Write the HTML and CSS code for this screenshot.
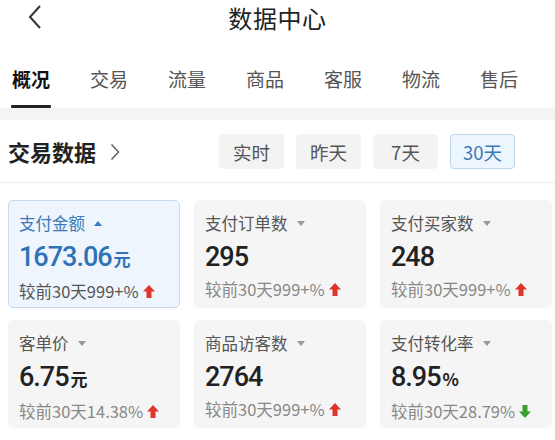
FILE: index.html
```html
<!DOCTYPE html>
<html lang="zh">
<head>
<meta charset="utf-8">
<link rel="stylesheet" href="styles.css">
</head>
<body>
<div class="page">
  <header class="topbar">
    <svg class="back" width="16" height="26" viewBox="0 0 16 26"><path d="M13 2 L3 13 L13 24" fill="none" stroke="#333" stroke-width="2"/></svg>
    <div class="title">数据中心</div>
  </header>
  <nav class="tabs">
    <div class="tab active">概况</div>
    <div class="tab">交易</div>
    <div class="tab">流量</div>
    <div class="tab">商品</div>
    <div class="tab">客服</div>
    <div class="tab">物流</div>
    <div class="tab">售后</div>
  </nav>
  <div class="band"></div>
  <section class="sec-head">
    <div class="sec-title">交易数据
      <svg class="chev" width="10" height="18" viewBox="0 0 10 18"><path d="M1.5 1.5 L8.5 9 L1.5 16.5" fill="none" stroke="#666" stroke-width="1.6"/></svg>
    </div>
    <div class="ranges">
      <div class="rbtn">实时</div>
      <div class="rbtn">昨天</div>
      <div class="rbtn">7天</div>
      <div class="rbtn on">30天</div>
    </div>
  </section>
  <main class="grid">
    <div class="card sel">
      <div class="lbl">支付金额 <span class="tri up"></span></div>
      <div class="val">1673.06<small>元</small></div>
      <div class="cmp">较前30天999+%<svg class="arr" width="12" height="13" viewBox="0 0 12 13"><path d="M6 0 L12 6.5 L8.5 6.5 L8.5 13 L3.5 13 L3.5 6.5 L0 6.5 Z" fill="#e0352b"/></svg></div>
    </div>
    <div class="card">
      <div class="lbl">支付订单数 <span class="tri"></span></div>
      <div class="val">295</div>
      <div class="cmp">较前30天999+%<svg class="arr" width="12" height="13" viewBox="0 0 12 13"><path d="M6 0 L12 6.5 L8.5 6.5 L8.5 13 L3.5 13 L3.5 6.5 L0 6.5 Z" fill="#e0352b"/></svg></div>
    </div>
    <div class="card">
      <div class="lbl">支付买家数 <span class="tri"></span></div>
      <div class="val">248</div>
      <div class="cmp">较前30天999+%<svg class="arr" width="12" height="13" viewBox="0 0 12 13"><path d="M6 0 L12 6.5 L8.5 6.5 L8.5 13 L3.5 13 L3.5 6.5 L0 6.5 Z" fill="#e0352b"/></svg></div>
    </div>
    <div class="card">
      <div class="lbl">客单价 <span class="tri"></span></div>
      <div class="val">6.75<small>元</small></div>
      <div class="cmp">较前30天14.38%<svg class="arr" width="12" height="13" viewBox="0 0 12 13"><path d="M6 0 L12 6.5 L8.5 6.5 L8.5 13 L3.5 13 L3.5 6.5 L0 6.5 Z" fill="#e0352b"/></svg></div>
    </div>
    <div class="card">
      <div class="lbl">商品访客数 <span class="tri"></span></div>
      <div class="val">2764</div>
      <div class="cmp">较前30天999+%<svg class="arr" width="12" height="13" viewBox="0 0 12 13"><path d="M6 0 L12 6.5 L8.5 6.5 L8.5 13 L3.5 13 L3.5 6.5 L0 6.5 Z" fill="#e0352b"/></svg></div>
    </div>
    <div class="card">
      <div class="lbl">支付转化率 <span class="tri"></span></div>
      <div class="val">8.95<small>%</small></div>
      <div class="cmp">较前30天28.79%<svg class="arr" width="12" height="13" viewBox="0 0 12 13"><path d="M6 13 L12 6.5 L8.5 6.5 L8.5 0 L3.5 0 L3.5 6.5 L0 6.5 Z" fill="#3aa02c"/></svg></div>
    </div>
  </main>
</div>
</body>
</html>
```
FILE: styles.css
```css
* { box-sizing: border-box; }
html, body { margin: 0; padding: 0; background: #fff; }
body {
  font-family: "Noto Sans CJK SC", "Noto Sans", sans-serif;
  color: #222;
  width: 555px;
  height: 440px;
  overflow: hidden;
}
.topbar {
  height: 38px;
  display: flex;
  align-items: center;
  justify-content: center;
  position: relative;
}
.back { position: absolute; left: 27px; top: 4px; }
.title { font-size: 24px; color: #222; margin-top: -4px; letter-spacing: 0.6px; }
.tabs {
  display: flex;
  height: 70px;
  padding-left: 12px;
  gap: 40px;
  align-items: flex-start;
}
.tab {
  font-size: 19px;
  color: #555;
  line-height: 1;
  padding-top: 31px;
  height: 70px;
  position: relative;
  white-space: nowrap;
}
.tab.active { color: #111; font-weight: 600; }
.tab.active::after {
  content: "";
  position: absolute;
  left: -1px;
  right: -1px;
  bottom: 0;
  height: 3px;
  background: #222;
  border-radius: 1px;
}
.band { height: 12px; background: #f4f4f4; }
.sec-head {
  height: 63px;
  display: flex;
  align-items: center;
  justify-content: space-between;
  padding: 0 40px 0 8px;
  border-bottom: 1px solid #ececec;
}
.sec-title {
  font-size: 22px;
  font-weight: 600;
  color: #222;
  display: flex;
  align-items: center;
  gap: 14px;
}
.chev { margin-top: 1px; }
.ranges { display: flex; gap: 12px; margin-top: 1px; }
.rbtn {
  width: 65px;
  height: 35px;
  border-radius: 4px;
  background: #f3f3f3;
  color: #555;
  font-size: 18.5px;
  display: flex;
  align-items: center;
  justify-content: center;
  border: 1px solid #f3f3f3;
}
.rbtn.on {
  background: #edf5fd;
  border-color: #bcd5ee;
  color: #3c79b8;
}
.grid {
  display: grid;
  grid-template-columns: 172px 172px 172px;
  column-gap: 14px;
  row-gap: 12px;
  padding: 17px 0 0 8px;
}
.card {
  height: 108px;
  background: #f5f5f5;
  border-radius: 5px;
  border: 1px solid #f5f5f5;
  padding: 10px 0 0 10px;
}
.card.sel { background: #eef5fd; border-color: #c7dbf0; }
.lbl {
  font-size: 16.5px;
  color: #555;
  line-height: 24px;
  display: flex;
  align-items: center;
  white-space: nowrap;
}
.tri {
  display: inline-block;
  width: 0; height: 0;
  margin-left: 9px;
  border-left: 4.5px solid transparent;
  border-right: 4.5px solid transparent;
  border-top: 5px solid #999;
}
.tri.up { border-top: 0; border-bottom: 5px solid #3c79b8; }
.sel .lbl { color: #3c79b8; }
.val {
  font-family: Roboto, "Noto Sans", sans-serif;
  font-size: 27px;
  font-weight: 500;
  color: #222;
  line-height: 30px;
  margin-top: 7px;
  letter-spacing: -1px;
  white-space: nowrap;
}
.val small { font-size: 17px; font-weight: 700; margin-left: 2px; letter-spacing: 0; font-family: "Noto Sans CJK SC", sans-serif; }
.sel .val { color: #2f72b7; }
.cmp {
  font-size: 16.5px;
  color: #888;
  line-height: 20px;
  margin-top: 7px;
  display: flex;
  align-items: center;
  white-space: nowrap;
}
.sel .cmp { color: #555; }
.arr { margin-left: 4px; }
```
